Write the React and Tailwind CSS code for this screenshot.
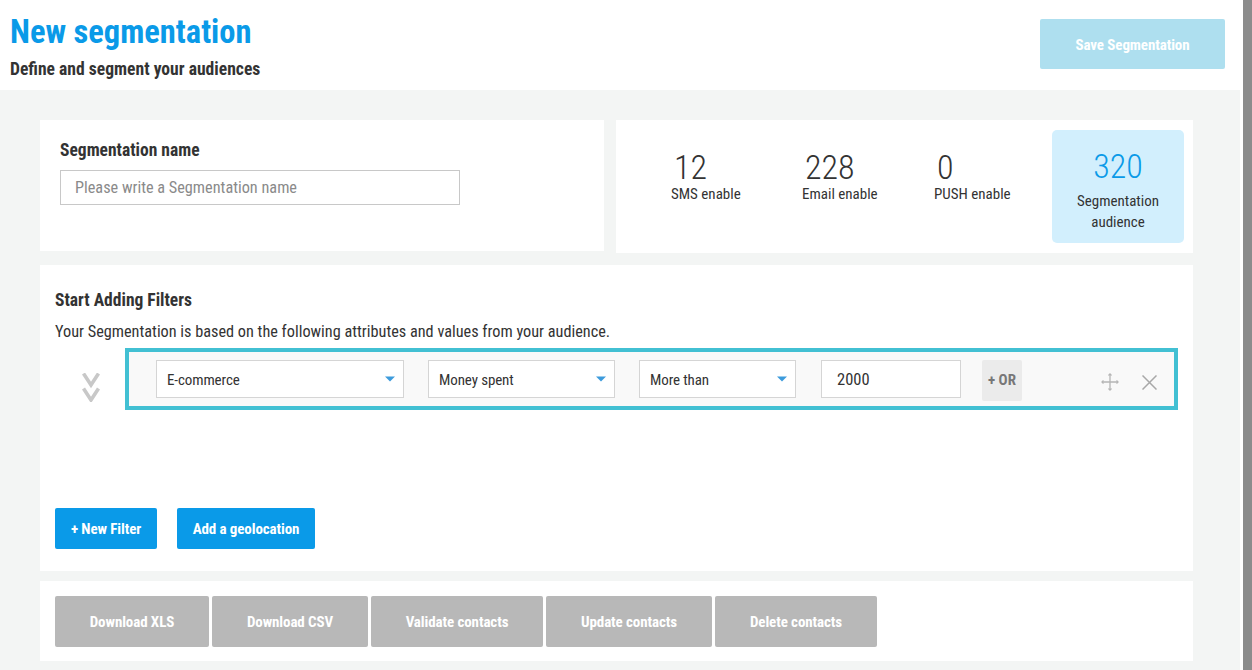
const Caret = () => (
  <svg width="10" height="6" viewBox="0 0 10 6" className="shrink-0">
    <path d="M0 0.5h10L5 5.5z" fill="#3d9bdc" />
  </svg>
);

const Select = ({ label, className }) => (
  <div className={`h-[38px] bg-white border border-[#d5d5d5] flex items-center justify-between pl-[10px] pr-[8px] text-[15px] text-[#333] ${className}`}>
    <span className="pt-[2px] [font-stretch:75%] tracking-[-0.1px]">{label}</span>
    <Caret />
  </div>
);

const Stat = ({ value, label, className }) => (
  <div className={`shrink-0 pt-[19px] ${className}`}>
    <div className="text-[34px] leading-[36px] font-light text-[#333] pl-[3px] [font-stretch:75%]">{value}</div>
    <div className="text-[15px] leading-[18px] text-[#333] [font-stretch:75%]">{label}</div>
  </div>
);

const GrayButton = ({ label, className }) => (
  <button className={`h-[51px] pt-[2px] bg-[#b8b8b8] rounded-[2px] text-white text-[15px] font-bold [font-stretch:75%] tracking-[-0.1px] ${className}`}>
    {label}
  </button>
);

export default function App() {
  return (
    <div className="h-screen flex overflow-hidden bg-white font-['Roboto',sans-serif]">
      <div className="w-[1240px] shrink-0 flex flex-col">
        {/* Header */}
        <div className="h-[90px] shrink-0 bg-white flex justify-between pl-[10px] pr-[15px]">
          <div>
            <h1 className="mt-[12px] text-[32.5px] leading-[40px] font-bold text-[#0a9ae8] [font-stretch:75%]">New segmentation</h1>
            <p className="mt-[7px] text-[17.6px] leading-[20px] font-bold text-[#333] [font-stretch:75%]">Define and segment your audiences</p>
          </div>
          <button className="mt-[19px] w-[185px] h-[50px] pt-[2px] rounded-[2px] bg-[#aedfef] text-white text-[15px] font-bold [font-stretch:75%] tracking-[-0.1px]">
            Save Segmentation
          </button>
        </div>

        {/* Content */}
        <div className="flex-1 bg-[#f3f5f4] pl-10 pr-[47px] pt-[30px]">
          <div className="flex gap-3 items-start">
            <div className="w-[564px] h-[131px] bg-white pl-5 pt-[19px]">
              <div className="text-[17.5px] leading-[22px] font-bold text-[#333] [font-stretch:75%]">Segmentation name</div>
              <input
                readOnly
                placeholder="Please write a Segmentation name"
                className="mt-[9px] block w-[400px] h-[35px] border border-[#c8c8c8] px-[14px] text-[16.25px] [font-stretch:75%] placeholder:text-[#8a8a8a] outline-none"
              />
            </div>
            <div className="flex-1 h-[133px] bg-white flex pl-[55px] pt-[10px]">
              <Stat value="12" label="SMS enable" className="w-[131px]" />
              <Stat value="228" label="Email enable" className="w-[132px]" />
              <Stat value="0" label="PUSH enable" className="w-[118px]" />
              <div className="w-[132px] h-[113px] rounded-[5px] bg-[#d2effd] text-center pt-[18px]">
                <div className="text-[34px] leading-[36px] font-light text-[#0a9ae8] [font-stretch:75%]">320</div>
                <div className="mt-[7px] text-[15px] leading-[21px] text-[#333] [font-stretch:75%]">
                  Segmentation
                  <br />
                  audience
                </div>
              </div>
            </div>
          </div>

          {/* Filters */}
          <div className="mt-3 h-[306px] bg-white pl-[15px] pr-[15px] pt-[24px] flex flex-col">
            <h2 className="text-[17.5px] leading-[22px] font-bold text-[#333] [font-stretch:75%]">Start Adding Filters</h2>
            <p className="mt-[11px] text-[16.25px] leading-[20px] text-[#333] [font-stretch:75%]">
              Your Segmentation is based on the following attributes and values from your audience.
            </p>
            <div className="mt-[6px] flex items-start">
              <div className="w-[70px] shrink-0 pl-[27px] pt-[25px]">
                <svg width="18" height="29" viewBox="0 0 18 29" fill="none" stroke="#c8c8c8" strokeWidth="3.6" className="block">
                  <path d="M1.5 0.5l7.5 11.5 7.5-11.5" />
                  <path d="M1.5 15.5l7.5 11.5 7.5-11.5" />
                </svg>
              </div>
              <div className="flex-1 h-[62px] border-4 border-[#42c0d3] bg-[#f9f9f9] flex pl-[27px] pt-[8px]">
                <Select label="E-commerce" className="w-[248px] mr-[24px]" />
                <Select label="Money spent" className="w-[187px] mr-[24px]" />
                <Select label="More than" className="w-[157px] mr-[25px]" />
                <div className="w-[140px] h-[38px] pt-[2px] bg-white border border-[#d5d5d5] flex items-center pl-[15px] text-[16.5px] text-[#333] [font-stretch:75%] mr-[21px]">
                  2000
                </div>
                <button className="w-[40px] h-[41px] rounded-[2px] bg-[#ebebeb] text-[#777] text-[15px] font-bold [font-stretch:75%] mr-[79px]">
                  + OR
                </button>
                <svg width="18" height="18" viewBox="0 0 18 18" fill="none" stroke="#b5b5b5" strokeWidth="1.3" className="mt-[13px] mr-[23px] shrink-0">
                  <path d="M9 1v16M1 9h16" />
                  <path d="M7.5 2.5L9 1l1.5 1.5M7.5 15.5L9 17l1.5-1.5M2.5 7.5L1 9l1.5 1.5M15.5 7.5L17 9l-1.5 1.5" />
                </svg>
                <svg width="15" height="15" viewBox="0 0 15 15" fill="none" stroke="#a8a8a8" strokeWidth="1.5" className="mt-[15px] shrink-0">
                  <path d="M0.5 0.5l14 14M14.5 0.5l-14 14" />
                </svg>
              </div>
            </div>
            <div className="mt-auto mb-[22px] flex gap-5">
              <button className="w-[102px] h-[41px] pt-[2px] rounded-[2px] bg-[#0a9ae8] text-white text-[15px] font-bold [font-stretch:75%] tracking-[-0.1px]">+ New Filter</button>
              <button className="w-[138px] h-[41px] pt-[2px] rounded-[2px] bg-[#0a9ae8] text-white text-[15px] font-bold [font-stretch:75%] tracking-[-0.1px]">Add a geolocation</button>
            </div>
          </div>

          {/* Bulk actions */}
          <div className="mt-[10px] h-[80px] bg-white pl-[15px] pt-[15px] flex gap-[3px]">
            <GrayButton label="Download XLS" className="w-[154px]" />
            <GrayButton label="Download CSV" className="w-[156px]" />
            <GrayButton label="Validate contacts" className="w-[172px]" />
            <GrayButton label="Update contacts" className="w-[166px]" />
            <GrayButton label="Delete contacts" className="w-[162px]" />
          </div>
        </div>
      </div>
      {/* Scrollbar */}
      <div className="ml-[3px] flex-1 bg-[#8c8c8c]" />
    </div>
  );
}
